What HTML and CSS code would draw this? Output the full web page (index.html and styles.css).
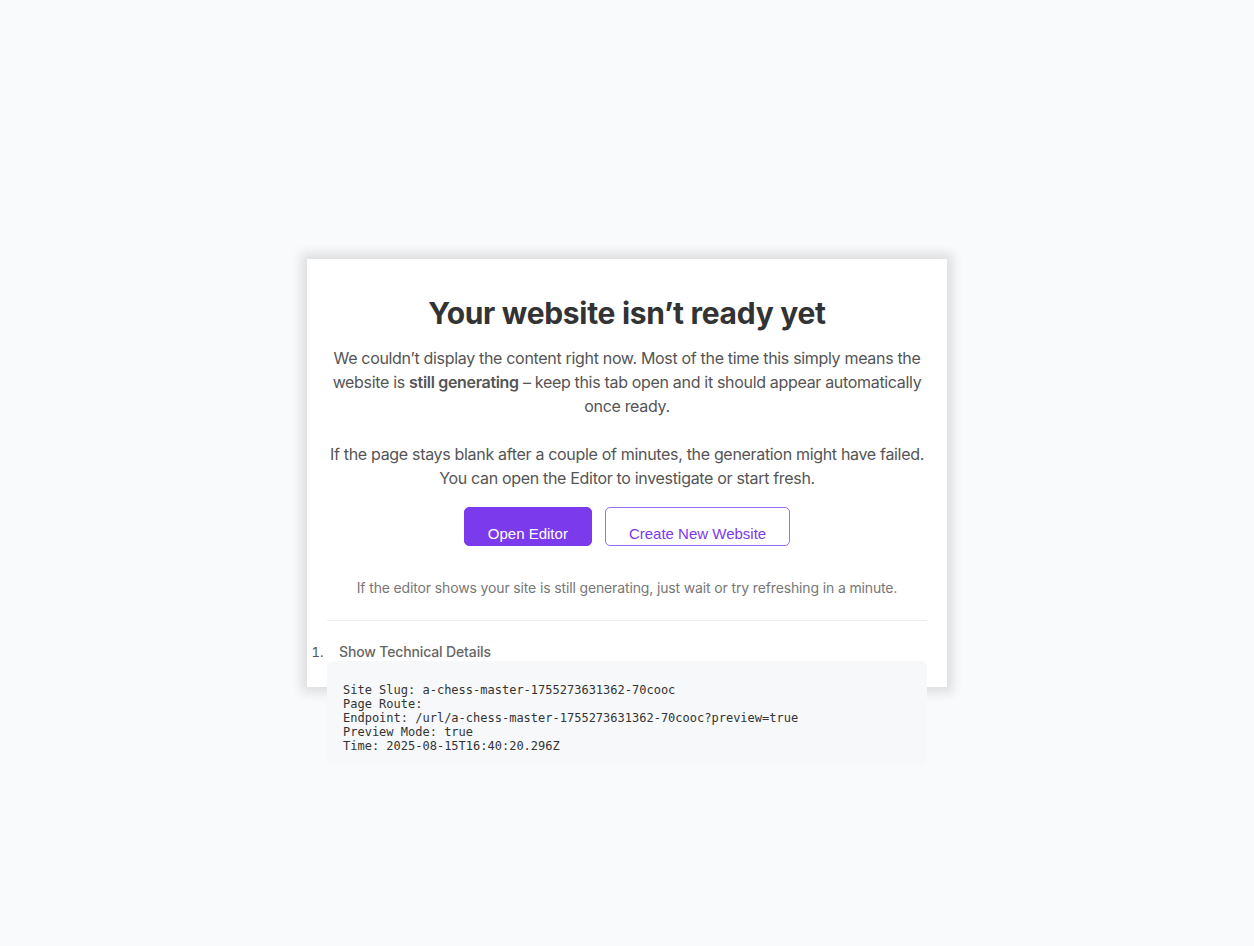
FILE: index.html
```html
<!DOCTYPE html>
<html lang="en">
<head>
  <meta charset="UTF-8">
  <meta name="viewport" content="width=device-width, initial-scale=1.0">
  <title>Website not ready</title>
  <link rel="stylesheet" href="styles.css">
</head>
<body>
  <div class="card">
    <h1>Your website isn’t ready yet</h1>
    <p class="lead">
      We couldn’t display the content right now. Most of the time this simply means the
      website is <strong>still generating</strong> – keep this tab open and it should appear automatically
      once ready.
    </p>
    <p class="lead lead-last">
      If the page stays blank after a couple of minutes, the generation might have failed.
      You can open the Editor to investigate or start fresh.
    </p>
    <div class="actions">
      <button class="btn btn-primary">Open Editor</button>
      <button class="btn btn-outline">Create New Website</button>
    </div>
    <p class="note">If the editor shows your site is still generating, just wait or try refreshing in a minute.</p>
    <ol class="tech">
      <li>
        <details open>
          <summary>Show Technical Details</summary>
<pre>Site Slug: a-chess-master-1755273631362-70cooc
Page Route: 
Endpoint: /url/a-chess-master-1755273631362-70cooc?preview=true
Preview Mode: true
Time: 2025-08-15T16:40:20.296Z</pre>
        </details>
      </li>
    </ol>
  </div>
</body>
</html>
```
FILE: styles.css
```css
html, body {
  margin: 0;
  height: 100%;
}
body {
  font-family: Inter, "Noto Sans", sans-serif;
  background: #f9fafb;
  color: #555;
  display: flex;
  align-items: center;
  justify-content: center;
}
.card {
  box-sizing: border-box;
  width: 640px;
  height: 428px;
  background: white;
  padding: 20px;
  text-align: center;
  box-shadow: 0 0 10px 6px rgba(0, 0, 0, 0.11);
}
h1 {
  font-size: 30px;
  line-height: 36px;
  font-weight: 700;
  color: #333;
  margin: 16px 0 15px;
  letter-spacing: -0.3px;
}
.lead {
  font-size: 16px;
  line-height: 24px;
  letter-spacing: -0.02em;
  margin: 0 0 24px;
}
.lead-last {
  margin-bottom: 17px;
}
.lead strong {
  font-weight: 600;
}
.actions {
  display: flex;
  justify-content: center;
  gap: 13px;
}
.btn {
  font-family: "Liberation Sans", Arial, sans-serif;
  font-size: 15px;
  line-height: 17px;
  padding: 17px 23px 3px;
  border-radius: 5px;
  border: 1px solid #7c3aed;
  cursor: pointer;
}
.btn-primary {
  background: #7c3aed;
  color: white;
}
.btn-outline {
  background: white;
  color: #7c3aed;
  border-color: #9d6cf2;
}
.note {
  font-size: 14px;
  line-height: 20px;
  letter-spacing: -0.01em;
  color: #777;
  margin: 32px 0 22px;
}
.tech {
  border-top: 1px solid #eee;
  text-align: left;
  margin: 0;
  padding: 0;
  list-style: decimal outside;
}
.tech li::marker {
  font-size: 13px;
  color: #555;
}
.tech summary {
  display: block;
  padding: 21px 12px 0;
  font-size: 14px;
  line-height: 19px;
  font-weight: 500;
  letter-spacing: -0.01em;
  color: #666;
  cursor: pointer;
}
.tech pre {
  margin: 0;
  background: #f7f8fa;
  border-radius: 6px;
  padding: 22px 16px 12px;
  font-family: "DejaVu Sans Mono", monospace;
  font-size: 12px;
  line-height: 14px;
  color: #333;
}
```
